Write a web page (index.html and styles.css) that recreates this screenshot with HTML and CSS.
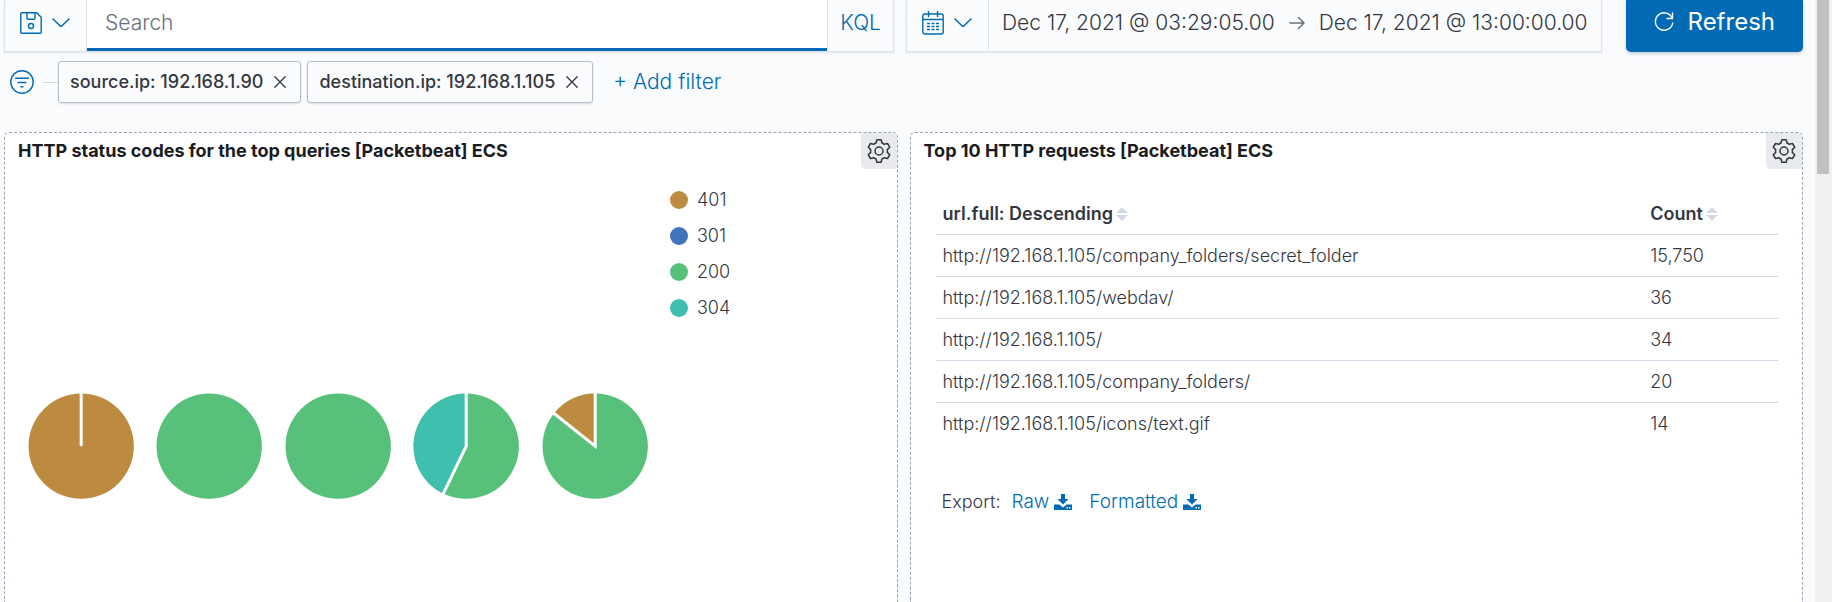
FILE: index.html
```html
<!DOCTYPE html>
<html lang="en">
<head>
<meta charset="utf-8">
<title>Packetbeat dashboard</title>
<link rel="stylesheet" href="styles.css">
</head>
<body>
<div class="app">
  <main class="page">
    <div class="query-bar">
      <div class="search-group">
        <button class="icon-button" type="button" aria-label="Saved queries">
          <svg class="icon-save" viewBox="0 0 22 22" fill="none" stroke="currentColor" stroke-width="1.4"><path d="M.8 1.8a1 1 0 0 1 1-1h14.9l4.5 4.5v14.9a1 1 0 0 1-1 1H1.800a1 1 0 0 1-1-1z"/><path d="M7 .8v5.400a1 1 0 0 0 1 1h6a1 1 0 0 0 1-1V.8"/><circle cx="11" cy="14" r="2.500"/></svg>
          <svg class="icon-chevron" viewBox="0 0 18 10" fill="none" stroke="currentColor" stroke-width="1.500" stroke-linecap="round" stroke-linejoin="round"><path d="M1 1l7.200 7q.8.7 1.600 0L17 1"/></svg>
        </button>
        <input class="search-input" type="text" placeholder="Search" aria-label="Search">
        <button class="kql-button" type="button">KQL</button>
      </div>
      <div class="date-group">
        <button class="icon-button" type="button" aria-label="Quick date selection">
          <svg class="icon-calendar" viewBox="0 0 22 24" fill="none" stroke="currentColor" stroke-width="1.400"><rect x=".8" y="3" width="20.400" height="20" rx="2"/><path d="M1 8.500h20M6.500 0v6M15.500 0v6" /><path d="M5 12.500h12M5 15.500h12M5 18.500h12" stroke-dasharray="3 1.500" stroke-width="1.500"/></svg>
          <svg class="icon-chevron" viewBox="0 0 18 10" fill="none" stroke="currentColor" stroke-width="1.500" stroke-linecap="round" stroke-linejoin="round"><path d="M1 1l7.200 7q.8.7 1.600 0L17 1"/></svg>
        </button>
        <div class="date-range">
          <button class="date-button" type="button">Dec 17, 2021 @ 03:29:05.00</button>
          <svg class="icon-arrow" viewBox="0 0 16 14" fill="none" stroke="currentColor" stroke-width="1.500" stroke-linecap="round" stroke-linejoin="round"><path d="M1 7h14M9.500 1.500L15 7l-5.500 5.500"/></svg>
          <button class="date-button" type="button">Dec 17, 2021 @ 13:00:00.00</button>
        </div>
      </div>
      <button class="refresh-button" type="button">
        <svg class="icon-refresh" viewBox="0 0 20 20" fill="none" stroke="currentColor" stroke-width="1.400" stroke-linecap="round" stroke-linejoin="round"><path d="M18.500 1v5.500H13"/><path d="M18.300 6.500A8.700 8.700 0 1 0 18.700 11"/></svg>
        Refresh
      </button>
    </div>

    <div class="filter-bar">
      <button class="filter-menu" type="button" aria-label="Change all filters">
        <svg class="icon-filter" viewBox="0 0 24 24" fill="none" stroke="currentColor" stroke-width="1.400" stroke-linecap="round"><circle cx="12" cy="12" r="11.200"/><path d="M5.500 8.300h13M8 12.500h8M11 16.800h2"/></svg>
      </button>
      <span class="filter-line"></span>
      <div class="filters">
        <span class="pill">source.ip: 192.168.1.90
          <button class="pill-remove" type="button" aria-label="Delete source.ip filter"><svg class="icon-cross" viewBox="0 0 12 12" stroke="currentColor" stroke-width="1.300" stroke-linecap="round"><path d="M.8.8l10.400 10.400M11.200.8L.8 11.200"/></svg></button>
        </span>
        <span class="pill">destination.ip: 192.168.1.105
          <button class="pill-remove" type="button" aria-label="Delete destination.ip filter"><svg class="icon-cross" viewBox="0 0 12 12" stroke="currentColor" stroke-width="1.300" stroke-linecap="round"><path d="M.8.8l10.400 10.400M11.200.8L.8 11.200"/></svg></button>
        </span>
      </div>
      <button class="add-filter" type="button">+ Add filter</button>
    </div>

    <div class="panels">
      <section class="panel">
        <header class="panel-header">
          <h2 class="panel-title">HTTP status codes for the top queries [Packetbeat] ECS</h2>
          <button class="panel-options" type="button" aria-label="Panel options"><svg class="icon-gear" viewBox="0 0 24 24" fill="none" stroke="currentColor" stroke-width="1.500" stroke-linejoin="round"><path d="M9.900.8h4.200l.9 3.200q1.200.5 2.200 1.300l3.300-.8 2.200 3.700-2.400 2.400q.2 1.400 0 2.800l2.400 2.400-2.200 3.700-3.300-.8q-1 .8-2.200 1.300l-.9 3.200H9.900L9 20q-1.200-.5-2.200-1.300l-3.300.8-2.200-3.700 2.400-2.400q-.2-1.400 0-2.800L1.300 8.200l2.200-3.700 3.300.8Q7.800 4.500 9 4z"/><circle cx="12" cy="12" r="4"/></svg></button>
        </header>
        <div class="chart">
          <div class="pies">
            <svg class="pie" viewBox="0 0 128 128"><circle class="c401" cx="64" cy="64" r="52.500"/><path class="cut" d="M64 64V10"/></svg>
            <svg class="pie" viewBox="0 0 128 128"><circle class="c200" cx="64" cy="64" r="52.500"/></svg>
            <svg class="pie" viewBox="0 0 128 128"><circle class="c200" cx="64" cy="64" r="52.500"/></svg>
            <svg class="pie" viewBox="0 0 128 128"><circle class="c200" cx="64" cy="64" r="52.500"/><path class="c304" d="M64 64L41.200 111.300A52.500 52.500 0 0 1 64 11.500z"/><path class="cut" d="M64 10V64L40.500 112.700"/></svg>
            <svg class="pie" viewBox="0 0 128 128"><circle class="c200" cx="64" cy="64" r="52.500"/><path class="c401" d="M64 64L23 31.300A52.500 52.500 0 0 1 64 11.500z"/><path class="cut" d="M64 10V64L21.800 30.400"/></svg>
          </div>
          <ul class="legend">
            <li class="legend-item"><span class="dot dot-401"></span>401</li>
            <li class="legend-item"><span class="dot dot-301"></span>301</li>
            <li class="legend-item"><span class="dot dot-200"></span>200</li>
            <li class="legend-item"><span class="dot dot-304"></span>304</li>
          </ul>
        </div>
      </section>

      <section class="panel">
        <header class="panel-header">
          <h2 class="panel-title">Top 10 HTTP requests [Packetbeat] ECS</h2>
          <button class="panel-options" type="button" aria-label="Panel options"><svg class="icon-gear" viewBox="0 0 24 24" fill="none" stroke="currentColor" stroke-width="1.500" stroke-linejoin="round"><path d="M9.900.8h4.200l.9 3.200q1.200.5 2.200 1.300l3.300-.8 2.200 3.700-2.400 2.400q.2 1.400 0 2.800l2.400 2.400-2.200 3.700-3.300-.8q-1 .8-2.200 1.300l-.9 3.200H9.900L9 20q-1.200-.5-2.200-1.300l-3.300.8-2.200-3.700 2.400-2.400q-.2-1.400 0-2.800L1.300 8.200l2.200-3.700 3.300.8Q7.800 4.500 9 4z"/><circle cx="12" cy="12" r="4"/></svg></button>
        </header>
        <div class="requests">
          <table class="table">
            <thead>
              <tr>
                <th class="col-url" scope="col">url.full: Descending<svg class="icon-sort" viewBox="0 0 12 14" fill="currentColor"><path d="M6 0l5.800 6H.2zM6 14L.2 8h11.600z"/></svg></th>
                <th class="col-count" scope="col">Count<svg class="icon-sort" viewBox="0 0 12 14" fill="currentColor"><path d="M6 0l5.800 6H.2zM6 14L.2 8h11.600z"/></svg></th>
              </tr>
            </thead>
            <tbody>
              <tr><td>http://192.168.1.105/company_folders/secret_folder</td><td>15,750</td></tr>
              <tr><td>http://192.168.1.105/webdav/</td><td>36</td></tr>
              <tr><td>http://192.168.1.105/</td><td>34</td></tr>
              <tr><td>http://192.168.1.105/company_folders/</td><td>20</td></tr>
              <tr><td>http://192.168.1.105/icons/text.gif</td><td>14</td></tr>
            </tbody>
          </table>
          <div class="export">
            <span>Export:</span>
            <a class="export-link" href="#raw">Raw<svg class="icon-download" viewBox="0 0 18 16" fill="currentColor"><path d="M7 0h4v5h3.500L9 10.500 3.500 5H7z"/><path fill-rule="evenodd" d="M0 10.500h5.300L9 13.500l3.700-3H18V16H0zM12.500 13v1.500H14V13zM15 13v1.500h1.500V13z"/></svg></a>
            <a class="export-link" href="#formatted">Formatted<svg class="icon-download" viewBox="0 0 18 16" fill="currentColor"><path d="M7 0h4v5h3.500L9 10.500 3.500 5H7z"/><path fill-rule="evenodd" d="M0 10.500h5.300L9 13.500l3.700-3H18V16H0zM12.500 13v1.500H14V13zM15 13v1.500h1.500V13z"/></svg></a>
          </div>
        </div>
      </section>
    </div>
  </main>
  <div class="scrollbar" aria-hidden="true"><div class="scroll-thumb"></div></div>
</div>
</body>
</html>
```
FILE: styles.css
```css
* { box-sizing: border-box; }

body {
  margin: 0;
  background: #fafbfd;
  color: #343741;
  font-family: Inter, "Liberation Sans", sans-serif;
  font-size: 18px;
  font-weight: 350;
  line-height: 24px;
}

button, input { font: inherit; color: inherit; margin: 0; border: 0; background: none; padding: 0; }
svg { display: block; flex: none; }

.app { display: flex; height: 100vh; overflow: hidden; }

.page {
  flex: 1;
  min-width: 0;
  display: flex;
  flex-direction: column;
  padding: 0 12px 0 4px;
}

/* Query bar */
.query-bar { display: flex; height: 52px; font-size: 21px; font-weight: 300; }

.search-group, .date-group {
  display: flex;
  border: 1px solid #dfe3eb;
  border-top: 0;
  background: #fbfcfd;
  box-shadow: 0 1px 2px rgba(100, 110, 130, .15);
}
.search-group { flex: 1; margin-right: 12px; }
.date-group { margin-right: 24px; }

.icon-button {
  display: flex;
  align-items: center;
  gap: 10px;
  padding: 0 16px 6px 15px;
  color: #006bb4;
  border-right: 1px solid #dfe3eb;
}
.icon-save { width: 22px; height: 22px; }
.icon-calendar { width: 22px; height: 24px; }
.icon-chevron { width: 18px; height: 10px; }

.search-input {
  flex: 1;
  min-width: 0;
  padding: 0 18px 3px;
  background: #fff;
  border-bottom: 3px solid #006bb4;
  outline: 0;
}
.search-input::placeholder { color: #69707d; opacity: 1; }

.kql-button { padding: 0 12px 6px; color: #006bb4; border-left: 1px solid #dfe3eb; }

.date-range { display: flex; align-items: center; gap: 14px; padding: 0 13px 6px; }
.icon-arrow { width: 16px; height: 14px; color: #69707d; }

.refresh-button {
  display: flex;
  align-items: center;
  gap: 14px;
  padding: 0 28px 8px;
  border-radius: 0 0 5px 5px;
  background: #006bb4;
  color: #fff;
  font-size: 24px;
  font-weight: 400;
  box-shadow: 0 2px 3px rgba(54, 97, 126, .25);
}
.icon-refresh { width: 20px; height: 20px; }

/* Filters */
.filter-bar { display: flex; align-items: center; padding: 9px 0 29px 6px; }
.filter-menu { color: #006bb4; }
.icon-filter { width: 24px; height: 24px; }
.filter-line { width: 15px; height: 1px; margin-left: 9px; background: #d3dae6; }
.filters { display: flex; gap: 6px; }
.pill {
  display: flex;
  align-items: center;
  gap: 11px;
  height: 42px;
  padding: 0 14px 0 11px;
  border: 1px solid #b8bdca;
  border-radius: 3px;
  background: #fbfcfd;
  font-weight: 450;
  box-shadow: 0 1px 2px rgba(100, 110, 130, .2);
}
.icon-cross { width: 12px; height: 12px; }
.add-filter { margin-left: 20px; color: #006bb4; font-size: 21px; }

/* Panels */
.panels { flex: 1; display: grid; grid-template-columns: 1fr 1fr; gap: 12px; }
.panel {
  border: 1px dashed #98a2b3;
  border-bottom: 0;
  border-radius: 5px 5px 0 0;
  background: #fff;
}
.panel-header { display: flex; justify-content: space-between; }
.panel-title {
  margin: 0;
  padding: 6px 13px;
  color: #1a1c21;
  font-size: 18px;
  font-weight: 650;
}
.panel-options {
  display: grid;
  place-items: center;
  width: 36px;
  height: 36px;
  border-radius: 0 4px 0 5px;
  background: #e9eaee;
}
.icon-gear { width: 24px; height: 24px; }

/* Pie charts */
.chart { display: grid; grid-template-columns: 74% 1fr; padding: 13px 12px 0; }
.pies { display: grid; grid-template-columns: repeat(5, 1fr); padding-top: 200px; }
.pie { width: 100%; }
.c401 { fill: #bd8b40; }
.c200 { fill: #57c17b; }
.c304 { fill: #3fbfad; }
.cut { fill: none; stroke: #fff; stroke-width: 3; }

.legend { margin: 0; padding: 0 0 0 11px; list-style: none; }
.legend-item { display: flex; align-items: center; gap: 9px; height: 36px; }
.dot { width: 18px; height: 18px; border-radius: 50%; }
.dot-401 { background: #bd8b40; }
.dot-301 { background: #4074bd; }
.dot-200 { background: #57c17b; }
.dot-304 { background: #3fbfad; }

/* Requests table */
.requests { padding: 23px 24px 0 25px; }
.table { width: 100%; border-collapse: collapse; table-layout: fixed; }
.table th, .table td { height: 42px; padding: 2px 7px 0; text-align: left; }
.table th { font-weight: 600; }
.table tbody tr { border-top: 1px solid #d3dae6; }
.col-url { width: 84%; }
.col-count { width: 16%; }
.icon-sort { display: inline-block; width: 12px; height: 14px; margin-left: 3px; vertical-align: -1px; color: #d3dae6; }

.export { display: flex; gap: 11px; padding: 46px 6px 0; }
.export-link { display: flex; align-items: center; gap: 5px; color: #006bb4; font-size: 19px; text-decoration: none; }
.export-link + .export-link { margin-left: 6px; }
.icon-download { width: 18px; height: 16px; }

/* Scrollbar */
.scrollbar { width: 17px; padding: 0 3px 0 2px; background: #f0f0f0; }
.scroll-thumb { width: 12px; height: 174px; background: #c1c1c1; }
```
